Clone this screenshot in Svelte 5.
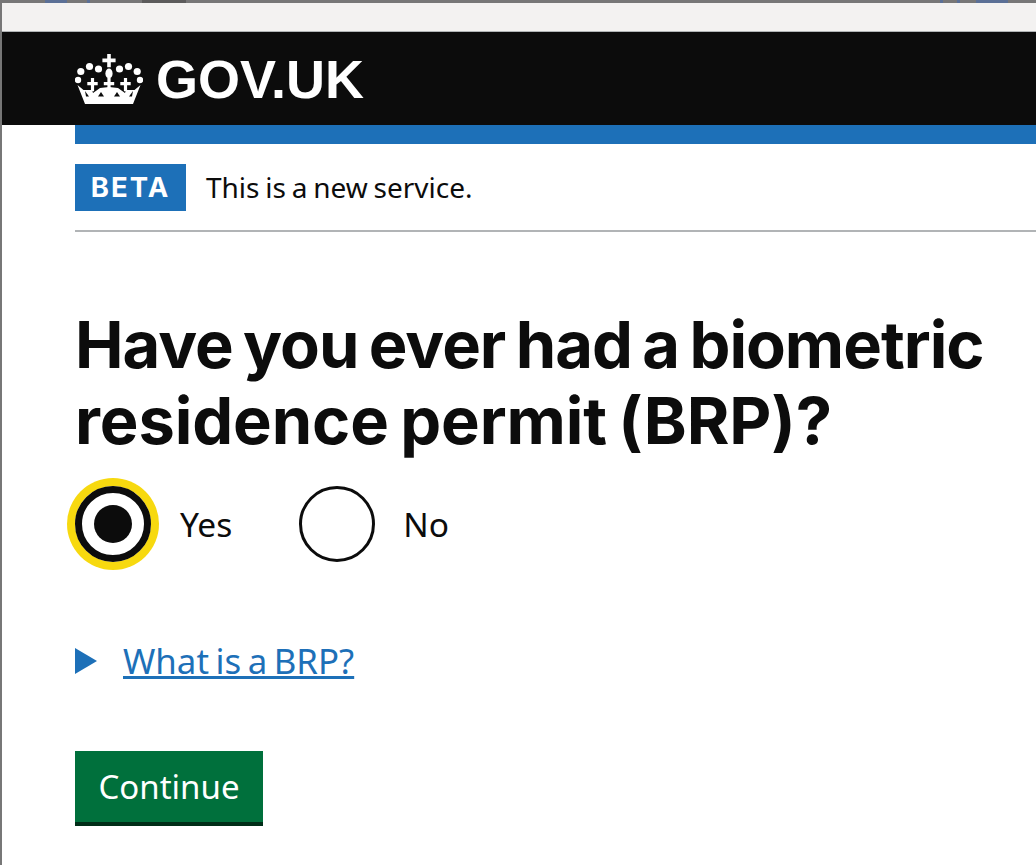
<script>
    let choice = $state("yes")
    const crosses = [17.5, 34, 50.5]
    // the tops of the window behind are only a few px of blurred strokes
    const scraps = [
        { gap: 43, width: 22, tone: "blue" },
        { gap: 20, width: 3, tone: "blue" },
        { gap: 52, width: 44, tone: "dark" },
        { gap: 754, width: 3, tone: "blue" },
        { gap: 14, width: 3, tone: "blue" },
        { gap: 16, width: 32, tone: "blue" }
    ]
</script>

<div class=page>
    <div class=browserbar>
        {#each scraps as s}
            <i class={s.tone} style:margin-left="{s.gap}px" style:width="{s.width}px"></i>
        {/each}
    </div>
    <div class=toolbar></div>
    <header class=masthead>
        <svg class=crown viewBox="0 0 68 50" width=68 height=50 aria-hidden=true>
            <g fill="#fff">
                <path d="M32.2 0h3.600v4.600h4.800v3.600h-4.800v5h-3.600v-5h-4.800V4.600h4.800z"/>
                <ellipse cx="34" cy="19.500" rx="3.600" ry="5"/>
                <circle cx="23.500" cy="15" r="3.600"/>
                <circle cx="44.500" cy="15" r="3.600"/>
                <circle cx="14.500" cy="12.500" r="3.600"/>
                <circle cx="53.500" cy="12.500" r="3.600"/>
                <circle cx="5.800" cy="17.500" r="3.600"/>
                <circle cx="62.200" cy="17.500" r="3.600"/>
                <circle cx="3" cy="26" r="3.200"/>
                <circle cx="65" cy="26" r="3.200"/>
                {#each crosses as x}
                    <path d="M{x - 1.6} 24h3.200v4h3.600v3.200h-3.600v6h-3.200v-6h-3.600V28h3.600z"/>
                {/each}
                <path d="M2.500 31 10 50h48l7.500-19-6 5-8.500 0-1 3-7-5-9-1-9 1-7 5-1-3-8.500 0z"/>
            </g>
            <g fill="#0c0c0c">
                <path d="M23 42.500 26 38l3 4.500z"/>
                <path d="M39 42.500 42 38l3 4.500z"/>
                <path d="M11 42.500 10 37l4 5.500z"/>
                <path d="M57 42.500 58 37l-4 5.500z"/>
            </g>
        </svg>
        <span class=logotype>GOV.UK</span>
    </header>
    <main class=content>
        <div class=accent></div>
        <div class=phase>
            <strong class=tag>BETA</strong>
            <span>This is a new service.</span>
        </div>
        <h1>Have you ever had a biometric <span class=second>residence permit (BRP)?</span></h1>
        <div class=radios>
            <label class=radio>
                <input type=radio name=brp value=yes bind:group={choice} />
                <span class="circle focused"><span class=dot></span></span>
                <span>Yes</span>
            </label>
            <label class="radio tight">
                <input type=radio name=brp value=no bind:group={choice} />
                <span class=circle></span>
                <span>No</span>
            </label>
        </div>
        <div class=details>
            <span class=arrow></span>
            <a href="#brp">What is a BRP?</a>
        </div>
        <button class=continue>Continue</button>
    </main>
</div>

<style>
    :global(body) {
        background: #fff;
    }
    .page {
        height: 865px;
        overflow: hidden;
        font-family: "Noto Sans", sans-serif;
        color: #0c0c0c;
        border-left: 2px solid #777;
        box-sizing: border-box;
    }
    .browserbar {
        height: 3px;
        background: #777;
        display: flex;
    }
    .browserbar i {
        flex: none;
    }
    .browserbar .blue {
        background: #5b7096;
    }
    .browserbar .dark {
        background: #5c5c5c;
    }
    .toolbar {
        height: 28px;
        background: #f3f2f1;
        border-bottom: 1px solid #b1b4b6;
    }
    .masthead {
        height: 93px;
        background: #0c0c0c;
        padding-left: 73px;
        display: flex;
        align-items: center;
        gap: 13px;
        color: #fff;
    }
    .crown {
        flex: none;
    }
    .logotype {
        font-family: "Liberation Sans", sans-serif;
        font-weight: 700;
        font-size: 54px;
    }
    .content {
        padding-left: 73px;
    }
    .accent {
        height: 19px;
        background: #1d70b8;
    }
    .phase {
        display: flex;
        align-items: center;
        gap: 20px;
        height: 88px;
        border-bottom: 2px solid #b1b4b6;
        box-sizing: border-box;
        font-size: 28px;
        word-spacing: -1.500px;
    }
    .tag {
        background: #1d70b8;
        color: #fff;
        width: 111px;
        height: 47px;
        display: flex;
        align-items: center;
        justify-content: center;
        font-family: Inter, sans-serif;
        font-size: 27.500px;
        letter-spacing: 2px;
    }
    h1 {
        margin: 75px 0 0;
        font-family: Inter, sans-serif;
        font-size: 65px;
        line-height: 76px;
        font-weight: 700;
        letter-spacing: -1px;
        word-spacing: -4px;
    }
    .second {
        letter-spacing: -.1px;
    }
    .radios {
        display: flex;
        gap: 50px;
        margin-top: 27px;
    }
    .radio {
        display: flex;
        align-items: center;
        gap: 29px;
        font-size: 33.500px;
    }
    .radio:first-child {
        margin-right: 17px;
    }
    .tight {
        gap: 28px;
    }
    .radio input {
        position: absolute;
        opacity: 0;
    }
    .circle {
        width: 76px;
        height: 76px;
        box-sizing: border-box;
        border: 3px solid #0c0c0c;
        border-radius: 50%;
        display: flex;
        align-items: center;
        justify-content: center;
    }
    .focused {
        border-width: 7px;
        box-shadow: 0 0 0 8px #f7d90f;
    }
    .dot {
        width: 38px;
        height: 38px;
        border-radius: 50%;
        background: #0c0c0c;
    }
    .details {
        display: flex;
        align-items: center;
        gap: 26px;
        margin-top: 75px;
        font-size: 34.800px;
        word-spacing: -2.500px;
    }
    .arrow {
        width: 0;
        height: 0;
        border-left: 22px solid #1d70b8;
        border-top: 13px solid transparent;
        border-bottom: 13px solid transparent;
    }
    .details a {
        color: #1d70b8;
    }
    .continue {
        display: block;
        margin-top: 67px;
        width: 188px;
        height: 75px;
        border: 0;
        border-bottom: 4px solid #002d18;
        background: #00703c;
        color: #fff;
        font: inherit;
        font-size: 33px;
        padding: 0;
    }
</style>
